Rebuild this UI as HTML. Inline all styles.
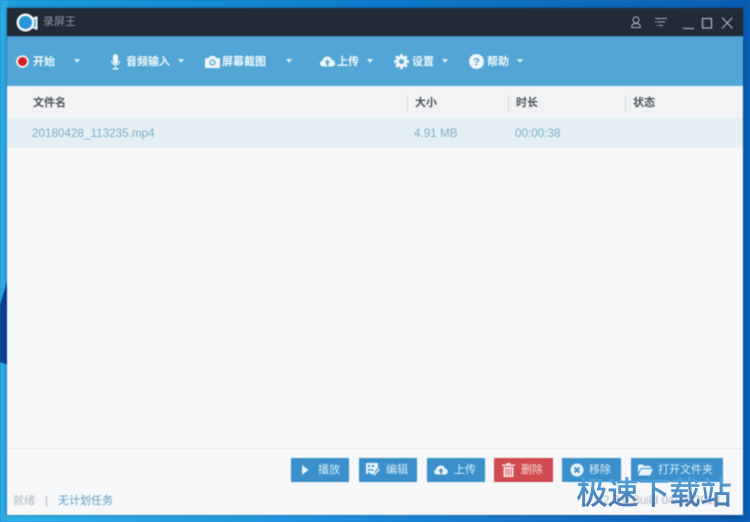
<!DOCTYPE html>
<html>
<head>
<meta charset="utf-8">
<style>
html,body{margin:0;padding:0;width:750px;height:522px;overflow:hidden}
body{position:relative;font-family:"Liberation Sans","Noto Sans CJK SC",sans-serif;font-size:11px;background:#0a6fc4}
#all{position:absolute;left:0;top:0;width:750px;height:522px;filter:blur(.4px)}
.a{position:absolute;white-space:nowrap}
.bg{position:absolute;left:0;top:0;width:750px;height:522px}
#win{position:absolute;left:7px;top:8px;width:736px;height:507px;background:#f5f7f9;box-shadow:0 0 3px rgba(0,30,70,.55)}
#title{position:absolute;left:0;top:0;width:736px;height:28px;background:#212b38}
#tool{position:absolute;left:0;top:28px;width:736px;height:50px;background:#52a5d5;border-top:1px solid #3f8ab8;box-sizing:border-box}
#head{position:absolute;left:0;top:79px;width:736px;height:31px;background:#f1f3f5}
#row{position:absolute;left:0;top:110px;width:736px;height:30px;background:#e5f0f6;border-top:1px solid #e2ebf0;box-sizing:border-box}
#foot{position:absolute;left:0;top:440px;width:736px;height:1px;background:#e4e6e8}
.t{color:#f2f8fc;font-weight:bold;font-size:11px;line-height:14px}
.tri{position:absolute;width:0;height:0;border-left:3px solid transparent;border-right:3px solid transparent;border-top:4px solid #dcedf8}
.h{color:#4e5256;font-weight:bold;font-size:11px;line-height:14px}
.sep{position:absolute;top:87px;width:1px;height:16px;background:#d6d9dc}
.c{color:#79afc9;font-size:11.7px;line-height:14px}
.btn{position:absolute;top:458px;height:24px;background:#3b90cb;color:#d9ecf8;font-size:11px;line-height:24px}
.btn span{position:absolute;top:0;white-space:nowrap}
.btn svg{position:absolute}
</style>
</head>
<body>
<div id="all">
<svg class="bg" viewBox="0 0 750 522">
<defs>
<linearGradient id="g1" x1="0" x2="1" y1="0" y2="0"><stop offset="0" stop-color="#1f9fe0"/><stop offset=".5" stop-color="#0f7ccd"/><stop offset="1" stop-color="#0a5eb4"/></linearGradient>
<linearGradient id="g2" x1="0" x2="1" y1="0" y2="0"><stop offset="0" stop-color="#2fb4ea"/><stop offset=".45" stop-color="#1f8fdc"/><stop offset="1" stop-color="#0b58ad"/></linearGradient>
</defs>
<rect width="750" height="9" fill="url(#g1)"/>
<rect y="510" width="750" height="12" fill="url(#g2)"/>
<rect width="8" height="522" fill="#2da9e2"/>
<rect x="742" width="8" height="522" fill="#0a5db3"/>
<polygon points="8,278 0,305 0,362 8,365" fill="#0d3f96"/>
</svg>

<div id="win">
<div id="title"></div>
<div id="tool"></div>
<div id="head"></div>
<div id="row"></div>
<div id="foot"></div>
</div>

<!-- logo -->
<svg class="a" style="left:16px;top:12px" width="24" height="22" viewBox="0 0 24 22">
<path d="M14 6.500l7.500-2.500v14L14 15.500z" fill="#eef4f7"/>
<rect x="16.500" y="7" width="3" height="8" rx="1" fill="#2a94d6"/>
<circle cx="9.500" cy="10.500" r="9" fill="#f4f7f9"/>
<circle cx="9.500" cy="10.500" r="6.500" fill="#2a94d6"/>
</svg>
<div class="a" style="left:43px;top:15px;color:#8b9299;font-size:11px;line-height:14px">录屏王</div>

<!-- window controls -->
<svg class="a" style="left:625px;top:12px" width="110" height="22" viewBox="0 0 110 22" fill="none" stroke="#a8b0b7" stroke-width="1">
<circle cx="11" cy="8" r="3"/>
<path d="M6.500 15.500c0-3 2-4 4.500-4s4.500 1 4.500 4z"/>
<path d="M30 6.500h12M32 10h8M34 13.500h4"/>
<path d="M30 6.500h1M30 10h1M32 13.500h1"/>
<path d="M58 16.500h11" stroke-width="1.200"/>
<rect x="77.500" y="6.500" width="9" height="9.500" stroke-width="1.300"/>
<path d="M97 5.500l10.500 11M107.500 5.500L97 16.500" stroke-width="1.200"/>
</svg>

<!-- toolbar -->
<svg class="a" style="left:16px;top:55px" width="13" height="13" viewBox="0 0 13 13"><circle cx="6.500" cy="6.500" r="6.300" fill="#f4f4f4"/><circle cx="6.500" cy="6.500" r="4.500" fill="#d01f26"/></svg>
<div class="a t" style="left:33px;top:55px">开始</div>
<div class="tri" style="left:74px;top:59px"></div>

<svg class="a" style="left:110px;top:54px" width="11" height="16" viewBox="0 0 11 16" fill="#eef6fb"><rect x="3" y="0" width="5" height="10" rx="2.500"/><path d="M1 6.500h1c0 5 7 5 7 0h1c0 3-2 4.500-4 4.800V14h2.500v1.500h-6V14H5v-2.700C3 11 1 9.500 1 6.500z"/></svg>
<div class="a t" style="left:126px;top:55px">音频输入</div>
<div class="tri" style="left:178px;top:59px"></div>

<svg class="a" style="left:205px;top:55px" width="15" height="13" viewBox="0 0 15 13"><path d="M0 3h4l1-2h5l1 2h4v10H0z" fill="#eef6fb"/><circle cx="7.500" cy="7.500" r="3" fill="#52a5d5"/><circle cx="7.500" cy="7.500" r="1.700" fill="#eef6fb"/></svg>
<div class="a t" style="left:222px;top:55px">屏幕截图</div>
<div class="tri" style="left:286px;top:59px"></div>

<svg class="a" style="left:320px;top:56px" width="15" height="11" viewBox="0 0 15 11"><path d="M3.500 10.500C1.500 10.500 0 9.200 0 7.500 0 6 1 5 2.300 4.700 2.700 2.300 4.800.5 7.300.5c2.300 0 4.200 1.500 4.700 3.500C13.700 4.200 15 5.600 15 7.300c0 1.800-1.500 3.200-3.300 3.200z" fill="#eef6fb"/><path d="M7.500 3.500L4.500 6.700h2v3h2v-3h2z" fill="#52a5d5"/></svg>
<div class="a t" style="left:337px;top:55px">上传</div>
<div class="tri" style="left:367px;top:59px"></div>

<svg class="a" style="left:394px;top:54px" width="15" height="15" viewBox="0 0 15 15"><g fill="#eef6fb"><circle cx="7.500" cy="7.500" r="5.500"/><rect x="6" y="0" width="3" height="15" rx=".5"/><rect x="6" y="0" width="3" height="15" rx=".5" transform="rotate(45 7.500 7.500)"/><rect x="6" y="0" width="3" height="15" rx=".5" transform="rotate(90 7.500 7.500)"/><rect x="6" y="0" width="3" height="15" rx=".5" transform="rotate(135 7.500 7.500)"/></g><circle cx="7.500" cy="7.500" r="2.500" fill="#52a5d5"/></svg>
<div class="a t" style="left:412px;top:55px">设置</div>
<div class="tri" style="left:442px;top:59px"></div>

<svg class="a" style="left:469px;top:54px" width="15" height="15" viewBox="0 0 15 15"><circle cx="7.500" cy="7.500" r="7.500" fill="#eef6fb"/><text x="7.500" y="11.500" text-anchor="middle" font-family="Liberation Sans" font-weight="bold" font-size="11" fill="#52a5d5">?</text></svg>
<div class="a t" style="left:487px;top:55px">帮助</div>
<div class="tri" style="left:517px;top:59px"></div>

<!-- table -->
<div class="a h" style="left:33px;top:96px">文件名</div>
<div class="sep" style="left:407px;top:96px"></div>
<div class="a h" style="left:415px;top:96px">大小</div>
<div class="sep" style="left:508px;top:96px"></div>
<div class="a h" style="left:516px;top:96px">时长</div>
<div class="sep" style="left:625px;top:96px"></div>
<div class="a h" style="left:633px;top:96px">状态</div>

<div class="a c" style="left:32px;top:127px">20180428_113235.mp4</div>
<div class="a c" style="left:414px;top:127px">4.91 MB</div>
<div class="a c" style="left:515px;top:127px">00:00:38</div>

<!-- buttons -->
<div class="btn" style="left:291px;width:58px"><svg style="left:10px;top:7px" width="8" height="10" viewBox="0 0 8 10"><path d="M1 0l6.500 5L1 10z" fill="#e8f4fb"/></svg><span style="left:27px">播放</span></div>
<div class="btn" style="left:359px;width:58px"><svg style="left:7px;top:5px" width="14" height="14" viewBox="0 0 14 14" fill="#e8f4fb"><path d="M0 0h12v5l-3 3-1 3H0zM2 2v2h2V2zM6 2v2h2V2zM2 6v2h2V6zM2 9.500v1.500h2V9.500zM5 6v2h2V6z" fill-rule="evenodd"/><path d="M13 5.500l1 1-5 5.500-2 1 1-2z"/></svg><span style="left:27px">编辑</span></div>
<div class="btn" style="left:427px;width:58px"><svg style="left:7px;top:7px" width="14" height="10" viewBox="0 0 15 11"><path d="M3.500 10.500C1.500 10.500 0 9.200 0 7.500 0 6 1 5 2.300 4.700 2.700 2.300 4.800.5 7.300.5c2.300 0 4.200 1.500 4.700 3.500C13.700 4.200 15 5.600 15 7.300c0 1.800-1.500 3.200-3.300 3.200z" fill="#e8f4fb"/><path d="M7.500 3.500L4.500 6.700h2v3h2v-3h2z" fill="#3b90cb"/></svg><span style="left:27px">上传</span></div>
<div class="btn" style="left:494px;width:59px;background:#d04a4f;color:#f6dadb"><svg style="left:8px;top:5px" width="13" height="14" viewBox="0 0 13 14" fill="#f8e6e6"><path d="M4.500 0h4v1.500H13V3H0V1.500h4.500zM1.500 4h10v10h-10zM3.500 5.500v7h1v-7zM6 5.500v7h1v-7zM8.500 5.500v7h1v-7z" fill-rule="evenodd"/></svg><span style="left:27px">删除</span></div>
<div class="btn" style="left:562px;width:59px"><svg style="left:8px;top:5px" width="14" height="14" viewBox="0 0 14 14"><circle cx="7" cy="7" r="6.500" fill="#e8f4fb"/><path d="M4.500 4.500l5 5M9.500 4.500l-5 5" stroke="#3b90cb" stroke-width="2"/></svg><span style="left:27px">移除</span></div>
<div class="btn" style="left:631px;width:92px"><svg style="left:7px;top:6px" width="15" height="12" viewBox="0 0 15 12" fill="#e8f4fb"><path d="M0 1.500C0 1 .5.500 1 .5h4l1 1.500h6c.5 0 1 .5 1 1V4H3L0 9z"/><path d="M3.500 5H15l-3 6.500H0z"/></svg><span style="left:27px">打开文件夹</span></div>

<!-- status -->
<div class="a" style="left:13px;top:494px;color:#b5b9bc;font-size:11px;line-height:14px">就绪</div>
<div class="a" style="left:45px;top:494px;color:#a9adb0;font-size:11px;line-height:14px">|</div>
<div class="a" style="left:58px;top:494px;color:#5e9cc0;font-size:11px;line-height:14px">无计划任务</div>
<div class="a" style="left:603px;top:494px;color:#b5b9bc;font-size:11.7px;line-height:14px">2.0.0 Build 04/28/2018</div>
</div>

<!-- watermark -->
<svg class="a" style="left:570px;top:470px" width="170" height="44" viewBox="0 0 170 44">
<defs><linearGradient id="wm" x1="0" x2="0" y1="0" y2="1"><stop offset="0" stop-color="#4fa6de"/><stop offset="1" stop-color="#4a6fa8"/></linearGradient></defs>
<text x="6.500" y="34" font-family="'Liberation Sans','Noto Sans CJK SC',sans-serif" font-size="31" fill="url(#wm)" stroke="url(#wm)" stroke-width=".7">极速下载站</text>
</svg>
</body>
</html>
